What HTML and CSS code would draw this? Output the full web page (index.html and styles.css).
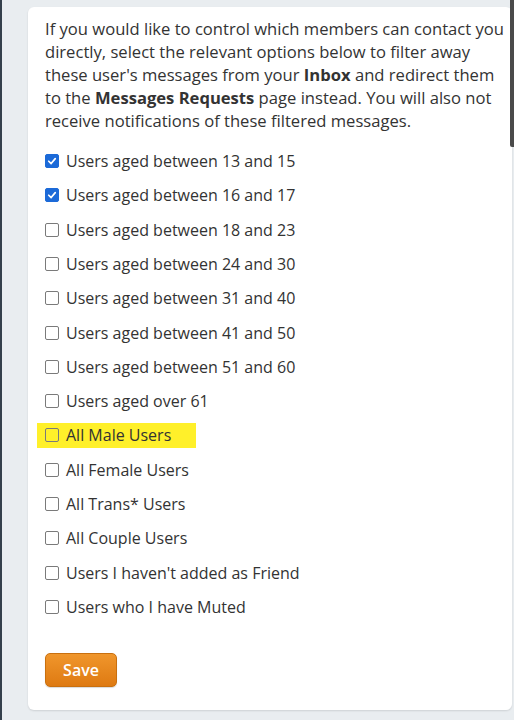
FILE: index.html
```html
<!DOCTYPE html>
<html>
<head>
<meta charset="utf-8">
<link rel="stylesheet" href="styles.css">
</head>
<body>
<div class="page">
  <div class="card">
    <p class="intro">If you would like to control which members can contact you<br>directly, select the relevant options below to filter away<br>these user's messages from your <b>Inbox</b> and redirect them<br>to the <b>Messages Requests</b> page instead. You will also not<br>receive notifications of these filtered messages.</p>
    <ul class="options">
      <li class="option"><span class="box checked"><svg viewBox="0 0 14 14"><path d="M3.2 7.3 L6 10 L10.8 4.2" /></svg></span><span class="label">Users aged between 13 and 15</span></li>
      <li class="option"><span class="box checked"><svg viewBox="0 0 14 14"><path d="M3.2 7.3 L6 10 L10.8 4.2" /></svg></span><span class="label">Users aged between 16 and 17</span></li>
      <li class="option"><span class="box"></span><span class="label">Users aged between 18 and 23</span></li>
      <li class="option"><span class="box"></span><span class="label">Users aged between 24 and 30</span></li>
      <li class="option"><span class="box"></span><span class="label">Users aged between 31 and 40</span></li>
      <li class="option"><span class="box"></span><span class="label">Users aged between 41 and 50</span></li>
      <li class="option"><span class="box"></span><span class="label">Users aged between 51 and 60</span></li>
      <li class="option"><span class="box"></span><span class="label">Users aged over 61</span></li>
      <li class="option highlight"><span class="box"></span><span class="label">All Male Users</span></li>
      <li class="option"><span class="box"></span><span class="label">All Female Users</span></li>
      <li class="option"><span class="box"></span><span class="label">All Trans* Users</span></li>
      <li class="option"><span class="box"></span><span class="label">All Couple Users</span></li>
      <li class="option"><span class="box"></span><span class="label">Users I haven't added as Friend</span></li>
      <li class="option"><span class="box"></span><span class="label">Users who I have Muted</span></li>
    </ul>
    <button class="save">Save</button>
  </div>
</div>
<div class="scroll-thumb"></div>
</body>
</html>
```
FILE: styles.css
```css
html, body {
  margin: 0;
  padding: 0;
}
body {
  background: #e9edf0;
  font-family: "Open Sans", "Noto Sans", sans-serif;
  color: #333;
  box-shadow: inset 2px 0 0 #34404c;
  min-height: 720px;
  position: relative;
  overflow: hidden;
}
.page {
  padding: 7px 0 10px 28px;
}
.card {
  width: 484px;
  height: 703px;
  box-sizing: border-box;
  background: #fff;
  border-radius: 6px;
  box-shadow: 0 1px 2px rgba(0,0,0,0.12);
  padding: 10px 2px 0 17px;
}
.intro {
  margin: 0;
  font-size: 16.6px;
  line-height: 23px;
  white-space: nowrap;
}
.intro b {
  font-weight: 700;
}
.options {
  list-style: none;
  margin: 12px 0 0 0;
  padding: 0;
}
.option {
  display: flex;
  align-items: center;
  height: 34.3px;
  font-size: 16px;
}
.option.highlight {
  background: #fff02a;
  margin-left: -8px;
  padding-left: 8px;
  width: 151px;
  height: 25px;
  margin-top: 4.6px;
  margin-bottom: 4.7px;
}
.box {
  width: 12px;
  height: 12px;
  border: 1.5px solid #7a7a7a;
  border-radius: 2px;
  background: #fff;
  margin-right: 7px;
  flex: none;
  display: flex;
  align-items: center;
  justify-content: center;
}
.highlight .box {
  background: transparent;
}
.box.checked {
  background: #1c6ad8;
  border-color: #1c6ad8;
}
.box svg {
  width: 14px;
  height: 14px;
}
.box svg path {
  fill: none;
  stroke: #fff;
  stroke-width: 2;
  stroke-linecap: round;
  stroke-linejoin: round;
}
.label {
  white-space: nowrap;
}
.save {
  margin-top: 29px;
  width: 72px;
  height: 34px;
  border: 1px solid #c9700f;
  border-radius: 5px;
  background: linear-gradient(#f0962c, #de7a12);
  color: #fff;
  font-family: "Open Sans", "Noto Sans", sans-serif;
  font-weight: 600;
  font-size: 16px;
  padding: 0;
  box-shadow: 0 1px 1px rgba(0,0,0,0.15);
}
.scroll-thumb {
  position: absolute;
  top: 0;
  right: 0;
  width: 4px;
  height: 147px;
  background: #4a4a4a;
  border-bottom-left-radius: 2px;
}
```
